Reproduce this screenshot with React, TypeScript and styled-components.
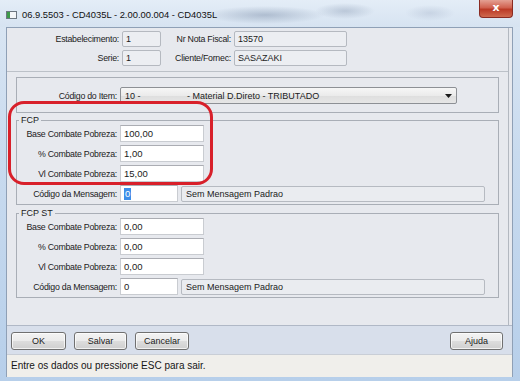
import React from 'react';
import styled, { createGlobalStyle } from 'styled-components';

const GlobalStyle = createGlobalStyle`
  html, body {
    margin: 0;
    padding: 0;
    background: #c6d8ee;
  }
  * {
    box-sizing: border-box;
  }
`;

const fcpRows = [
  { label: 'Base Combate Pobreza:', value: '100,00' },
  { label: '% Combate Pobreza:', value: '1,00' },
  { label: 'Vl Combate Pobreza:', value: '15,00' },
];

const fcpStRows = [
  { label: 'Base Combate Pobreza:', value: '0,00' },
  { label: '% Combate Pobreza:', value: '0,00' },
  { label: 'Vl Combate Pobreza:', value: '0,00' },
];

const WindowIcon = () => (
  <svg width="11" height="8" viewBox="0 0 11 8">
    <rect x="0.5" y="0.5" width="10" height="7" fill="#f4f6f8" stroke="#6d7680" />
    <rect x="1" y="1" width="3" height="6" fill="#3f9a4a" />
  </svg>
);

const ComboArrow = () => (
  <svg width="7" height="4" viewBox="0 0 7 4">
    <path d="M0 0 L7 0 L3.5 4 Z" fill="#1a1a1a" />
  </svg>
);

const App = () => {
  return (
    <>
      <GlobalStyle />
      <Window>
        <TitleBar>
          <TitleIcon>
            <WindowIcon />
          </TitleIcon>
          <TitleText>06.9.5503 - CD4035L - 2.00.00.004 - CD4035L</TitleText>
          <CloseButton>x</CloseButton>
        </TitleBar>

        <Client>
          <MainPanel>
            <Header>
              <HeaderRow>
                <Label width={112}>Estabelecimento:</Label>
                <ReadOnlyField width={39}>1</ReadOnlyField>
                <Label width={70}>Nr Nota Fiscal:</Label>
                <ReadOnlyField width={113}>13570</ReadOnlyField>
              </HeaderRow>
              <HeaderRow>
                <Label width={112}>Serie:</Label>
                <ReadOnlyField width={39}>1</ReadOnlyField>
                <Label width={70}>Cliente/Fornec:</Label>
                <ReadOnlyField width={113}>SASAZAKI</ReadOnlyField>
              </HeaderRow>
            </Header>

            <Content>
              <ItemBox>
                <FormRow>
                  <Label width={100}>Código do Item:</Label>
                  <Combo>
                    <ComboCode>10 -</ComboCode>
                    <ComboText>- Material D.Direto - TRIBUTADO</ComboText>
                    <ComboButton>
                      <ComboArrow />
                    </ComboButton>
                  </Combo>
                </FormRow>
              </ItemBox>

              <Group>
                <Legend>FCP</Legend>
                {fcpRows.map((row) => (
                  <FormRow key={row.label}>
                    <Label width={100}>{row.label}</Label>
                    <TextInput width={84}>{row.value}</TextInput>
                  </FormRow>
                ))}
                <FormRow>
                  <Label width={100}>Código da Mensagem:</Label>
                  <TextInput width={58}>
                    <Selected>0</Selected>
                  </TextInput>
                  <MessageField>Sem Mensagem Padrao</MessageField>
                </FormRow>
              </Group>

              <Group>
                <Legend>FCP ST</Legend>
                {fcpStRows.map((row) => (
                  <FormRow key={row.label}>
                    <Label width={100}>{row.label}</Label>
                    <TextInput width={84}>{row.value}</TextInput>
                  </FormRow>
                ))}
                <FormRow>
                  <Label width={100}>Código da Mensagem:</Label>
                  <TextInput width={58}>0</TextInput>
                  <MessageField>Sem Mensagem Padrao</MessageField>
                </FormRow>
              </Group>
            </Content>
          </MainPanel>

          <ButtonBar>
            <Button width={55}>OK</Button>
            <Button width={53}>Salvar</Button>
            <Button width={54}>Cancelar</Button>
            <Spacer />
            <Button width={53}>Ajuda</Button>
          </ButtonBar>

          <StatusBar>Entre os dados ou pressione ESC para sair.</StatusBar>
        </Client>

        <Highlight />
      </Window>
    </>
  );
};

const Window = styled.div`
  position: relative;
  width: 520px;
  height: 381px;
  display: flex;
  flex-direction: column;
  overflow: hidden;
  font-family: 'Liberation Sans', Arial, sans-serif;
  color: #1b1b1b;
  background: linear-gradient(180deg, #dce7f3 0%, #c9dbef 40%, #b7cfea 100%);
`;

const TitleBar = styled.div`
  height: 27px;
  flex: none;
  display: flex;
  align-items: flex-start;
  padding-left: 6px;
  background:
    radial-gradient(ellipse 60px 9px at 265px 15px, rgba(120, 138, 165, 0.45), transparent),
    radial-gradient(ellipse 30px 8px at 345px 11px, rgba(120, 138, 165, 0.35), transparent),
    radial-gradient(ellipse 25px 8px at 430px 13px, rgba(150, 165, 190, 0.3), transparent),
    linear-gradient(180deg, #e4edf7 0%, #d6e3f1 100%);
`;

const TitleIcon = styled.div`
  margin-top: 11px;
  display: flex;
`;

const TitleText = styled.div`
  margin: 9px 0 0 5px;
  font-size: 9.4px;
  line-height: 12px;
  color: #111;
  white-space: nowrap;
`;

const CloseButton = styled.div`
  margin-left: auto;
  margin-right: 7px;
  width: 34px;
  height: 18px;
  display: flex;
  align-items: center;
  justify-content: center;
  border: 1px solid #8a2b22;
  border-top: none;
  border-radius: 0 0 4px 4px;
  background: linear-gradient(180deg, #e4a093 0%, #d0614f 45%, #bb3a26 55%, #cf6a4f 100%);
  color: #fff;
  font-family: 'DejaVu Sans', sans-serif;
  font-weight: bold;
  font-size: 11px;
  line-height: 1;
  padding-bottom: 2px;
`;

const Client = styled.div`
  flex: 1;
  margin: 0 7px 4px 6px;
  display: flex;
  flex-direction: column;
  border: 1px solid #8fa0b6;
  border-bottom: none;
  background: #e7e9ee;
`;

const MainPanel = styled.div`
  flex: 1;
  margin-right: 3px;
  border-right: 1px solid #b3b8c0;
  display: flex;
  flex-direction: column;
`;

const Header = styled.div`
  padding: 3px 0 5px;
  display: flex;
  flex-direction: column;
  gap: 3px;
  border-bottom: 1px solid #bcc1c8;
`;

const HeaderRow = styled.div`
  display: flex;
  align-items: center;
`;

const Label = styled.div<{ width: number }>`
  width: ${(p) => p.width}px;
  margin-right: 3px;
  text-align: right;
  font-size: 8.8px;
  letter-spacing: -0.25px;
  white-space: nowrap;
  color: #1b1b1b;
`;

const ReadOnlyField = styled.div<{ width: number }>`
  width: ${(p) => p.width}px;
  height: 16px;
  padding: 0 3px;
  display: flex;
  align-items: center;
  font-size: 9px;
  background: #eceef2;
  border: 1px solid #b5b9c0;
  border-radius: 2px;
`;

const Content = styled.div`
  padding: 5px 9px 0;
  display: flex;
  flex-direction: column;
  gap: 2px;
`;

const ItemBox = styled.div`
  border: 1px solid #a9aeb6;
  padding: 9px 0 8px;
`;

const FormRow = styled.div`
  display: flex;
  align-items: center;
  height: 17px;
`;

const Combo = styled.div`
  position: relative;
  width: 337px;
  height: 17px;
  display: flex;
  align-items: center;
  padding-left: 4px;
  font-size: 9px;
  border: 1px solid #8d9095;
  border-radius: 2px;
  background: linear-gradient(180deg, #f6f6f6 0%, #ebebeb 50%, #dedede 51%, #e6e6e6 100%);
`;

const ComboCode = styled.span`
  width: 62px;
`;

const ComboText = styled.span`
  flex: 1;
`;

const ComboButton = styled.span`
  width: 14px;
  display: flex;
  justify-content: center;
  margin-right: 1px;
`;

const Group = styled.fieldset`
  margin: 0;
  padding: 0 0 2px;
  border: 1px solid #a9aeb6;
  display: flex;
  flex-direction: column;
  gap: 3px;
  & + & {
    margin-top: 1px;
  }
`;

const Legend = styled.legend`
  margin-left: 2px;
  padding: 0 2px;
  font-size: 9px;
  line-height: 10px;
  color: #1b1b1b;
`;

const TextInput = styled.div<{ width: number }>`
  width: ${(p) => p.width}px;
  height: 17px;
  padding: 0 3px;
  display: flex;
  align-items: center;
  font-size: 9.5px;
  background: #fff;
  border: 1px solid #c9ccd1;
  border-top-color: #abadb3;
`;

const Selected = styled.span`
  background: #3d8ee8;
  color: #fff;
  padding: 0 1px;
  line-height: 12px;
`;

const MessageField = styled.div`
  margin-left: 3px;
  width: 304px;
  height: 16px;
  padding: 0 4px;
  display: flex;
  align-items: center;
  font-size: 9px;
  background: #eaecf0;
  border: 1px solid #b6bac1;
  border-radius: 2px;
`;

const ButtonBar = styled.div`
  height: 29px;
  flex: none;
  display: flex;
  align-items: flex-start;
  gap: 8px;
  padding: 6px 9px 0 4px;
  background: #d8dfeb;
  border-top: 1px solid #b0b8c6;
`;

const Button = styled.div<{ width: number }>`
  width: ${(p) => p.width}px;
  height: 18px;
  display: flex;
  align-items: center;
  justify-content: center;
  font-size: 9px;
  color: #1b1b1b;
  border: 1px solid #707070;
  border-radius: 3px;
  background: linear-gradient(180deg, #f3f3f3 0%, #ebebeb 50%, #dddddd 51%, #cfcfcf 100%);
  box-shadow: inset 0 0 0 1px rgba(255, 255, 255, 0.7);
`;

const Spacer = styled.div`
  flex: 1;
`;

const StatusBar = styled.div`
  height: 23px;
  flex: none;
  padding-left: 4px;
  font-size: 10px;
  line-height: 22px;
  color: #151515;
  background: #f0efeb;
  border-top: 1px solid #c9ced6;
`;

const Highlight = styled.div`
  position: absolute;
  left: 8px;
  top: 101px;
  width: 205px;
  height: 84px;
  border: 3px solid #d8202a;
  border-radius: 16px;
  pointer-events: none;
`;

export default App;
